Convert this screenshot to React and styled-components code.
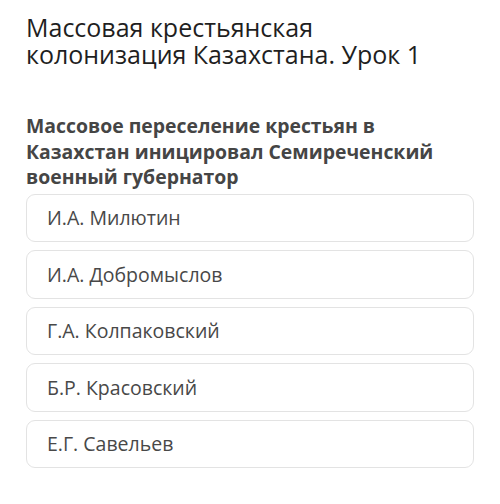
import React from 'react';
import styled, { createGlobalStyle } from 'styled-components';

const GlobalStyle = createGlobalStyle`
  body {
    margin: 0;
    background: #ffffff;
    font-family: 'Open Sans', 'Noto Sans', sans-serif;
  }
`;

const Page = styled.div`
  padding: 14px 26px 0 26px;
`;

const Title = styled.h1`
  margin: 0;
  font-size: 25px;
  font-weight: 400;
  line-height: 27px;
  color: #1f1f1f;
`;

const Question = styled.h2`
  margin: 45px 0 0 0;
  font-size: 19.4px;
  font-weight: 700;
  line-height: 25.5px;
  color: #454545;
`;

const Options = styled.div`
  display: flex;
  flex-direction: column;
  gap: 8px;
  margin-top: 4px;
`;

const Option = styled.button`
  display: flex;
  align-items: center;
  height: 48.5px;
  padding: 0 20px;
  border: 1.5px solid #e3e3e3;
  border-radius: 9px;
  background: #ffffff;
  font-family: 'Open Sans', 'Noto Sans', sans-serif;
  font-size: 19.5px;
  color: #484848;
  text-align: left;
  box-sizing: border-box;
`;

const answers = [
  'И.А. Милютин',
  'И.А. Добромыслов',
  'Г.А. Колпаковский',
  'Б.Р. Красовский',
  'Е.Г. Савельев',
];

const App = () => {
  return (
    <Page>
      <GlobalStyle />
      <Title>
        Массовая крестьянская
        <br />
        колонизация Казахстана. Урок 1
      </Title>
      <Question>
        Массовое переселение крестьян в
        <br />
        Казахстан иницировал Семиреченский
        <br />
        военный губернатор
      </Question>
      <Options>
        {answers.map((a) => (
          <Option key={a}>{a}</Option>
        ))}
      </Options>
    </Page>
  );
};

export default App;
